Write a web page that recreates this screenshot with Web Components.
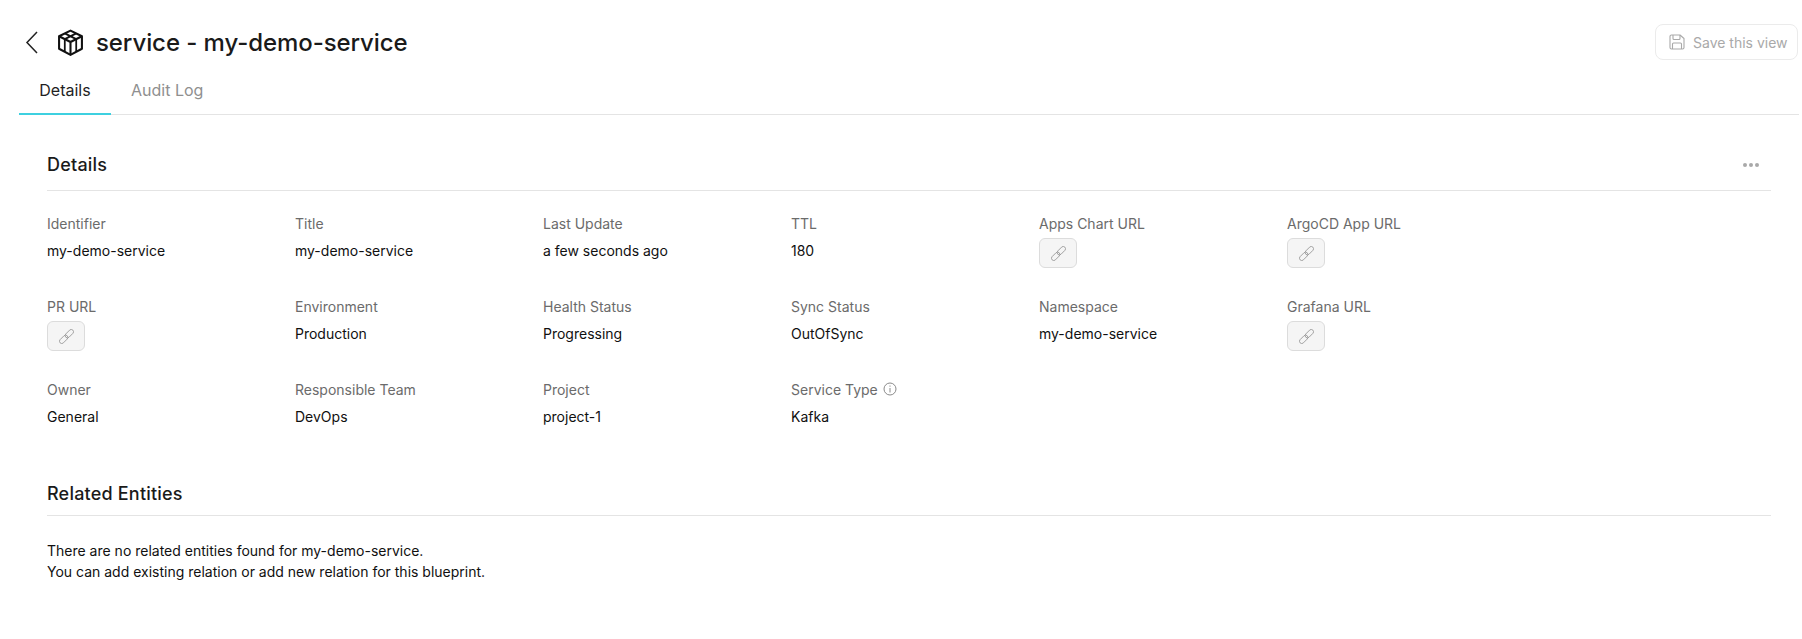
<!DOCTYPE html>
<html>
<head>
<meta charset="utf-8">
<style>
  html, body { margin: 0; background: #fff; }
  body { font-family: Inter, "Liberation Sans", sans-serif; color: #101010; overflow: hidden; }
</style>
</head>
<body>
<page-header></page-header>
<page-tabs></page-tabs>
<info-section heading="Details" menu>
  <info-grid>
    <info-field label="Identifier">my-demo-service</info-field>
    <info-field label="Title">my-demo-service</info-field>
    <info-field label="Last Update">a few seconds ago</info-field>
    <info-field label="TTL">180</info-field>
    <info-field label="Apps Chart URL"><link-button></link-button></info-field>
    <info-field label="ArgoCD App URL"><link-button></link-button></info-field>
    <info-field label="PR URL"><link-button></link-button></info-field>
    <info-field label="Environment">Production</info-field>
    <info-field label="Health Status">Progressing</info-field>
    <info-field label="Sync Status">OutOfSync</info-field>
    <info-field label="Namespace">my-demo-service</info-field>
    <info-field label="Grafana URL"><link-button></link-button></info-field>
    <info-field label="Owner">General</info-field>
    <info-field label="Responsible Team">DevOps</info-field>
    <info-field label="Project">project-1</info-field>
    <info-field label="Service Type" hint>Kafka</info-field>
  </info-grid>
</info-section>
<info-section heading="Related Entities" class="related">
  <div style="font-size:14px;line-height:21px;color:#101010">
    There are no related entities found for my-demo-service.<br>
    You can add existing relation or add new relation for this blueprint.
  </div>
</info-section>

<script>
class PageHeader extends HTMLElement {
  constructor() {
    super()
    this.attachShadow({ mode: 'open' })
    this.shadowRoot.innerHTML = `
      <style>
        :host { display: flex; align-items: center; height: 60px; padding: 24px 0 0 24px; box-sizing: border-box; }
        .back { width: 16px; height: 24px; display: block; }
        .box { width: 27px; height: 27px; margin-left: 17px; display: block; }
        h1 { margin: 1px 0 0 12px; font: 500 24px/1 Inter, sans-serif; color: #1a1a1a; letter-spacing: -.08px; }
        .save { margin-left: auto; margin-right: 4px; height: 36px; width: 143px; box-sizing: border-box; border: 1px solid #ebebeb; border-radius: 8px;
          display: flex; align-items: center; gap: 8px; padding-left: 13px; color: #a9a9a9; font-size: 14px; white-space: nowrap; }
        .save svg { width: 16px; height: 16px; flex: none; }
      </style>
      <svg class="back" viewBox="0 0 16 24" fill="none" stroke="#222" stroke-width="1.5"><path d="M13 2 3 12.5 13 23"/></svg>
      <svg class="box" viewBox="0 0 26 26" fill="none" stroke="#111" stroke-width="2" stroke-linejoin="round">
        <path d="M13 1.500 24 7V19L13 25 2 19V7Z"/>
        <path d="M2 7 13 12.500 24 7M13 12.500V25"/>
        <path d="M7.500 4.250 18.500 9.750V22M18.500 4.250 7.500 9.750V22" stroke-width="1.700"/>
      </svg>
      <h1>service - my-demo-service</h1>
      <div class="save">
        <svg viewBox="0 0 16 16" fill="none" stroke="#a9a9a9" stroke-width="1.1" stroke-linejoin="round">
          <path d="M2.500 1h8.500l4 3.500v9a1.500 1.500 0 0 1-1.500 1.500h-11A1.500 1.500 0 0 1 1 13.500v-11A1.500 1.500 0 0 1 2.500 1Z"/>
          <path d="M4 1v3.500a1 1 0 0 0 1 1h5a1 1 0 0 0 1-1V1M3.500 15V10a1 1 0 0 1 1-1h7a1 1 0 0 1 1 1v5"/>
        </svg>
        <span>Save this view</span>
      </div>
    `
  }
}

class PageTabs extends HTMLElement {
  constructor() {
    super()
    this.attachShadow({ mode: 'open' })
    this.shadowRoot.innerHTML = `
      <style>
        :host { display: flex; height: 54px; margin: 0 3px 0 19px; border-bottom: 1px solid #e4e4e4; }
        div { font-size: 16px; height: 54px; box-sizing: border-box; display: flex; align-items: center; padding-top: 6px; }
        .on { width: 92px; justify-content: center; color: #1f1f1f; border-bottom: 2px solid #3dd0e0; height: 55px; padding-top: 7px; }
        .off { color: #8f8f8f; margin-left: 20px; }
      </style>
      <div class="on">Details</div>
      <div class="off">Audit Log</div>
    `
  }
}

class InfoSection extends HTMLElement {
  constructor() {
    super()
    this.attachShadow({ mode: 'open' })
    this.shadowRoot.innerHTML = `
      <style>
        :host { display: block; margin: 0 31px 0 47px; padding-top: 34px; }
        :host(.related) { padding-top: 16px; }
        header { display: flex; align-items: center; justify-content: space-between; height: 32px; padding-bottom: 9px; border-bottom: 1px solid #e4e4e4; }
        :host(.related) header { padding-bottom: 5px; }
        h2 { margin: 0; font: 500 18px/1 Inter, sans-serif; color: #1a1a1a; letter-spacing: .2px; }
        .more { display: none; margin-right: 12px; gap: 2px; }
        :host([menu]) .more { display: flex; }
        .more i { width: 4px; height: 4px; border-radius: 50%; background: #a9a9a9; }
        main { padding-top: 22px; }
        :host(.related) main { padding-top: 24px; }
      </style>
      <header><h2></h2><div class="more"><i></i><i></i><i></i></div></header>
      <main><slot></slot></main>
    `
  }
  connectedCallback() {
    this.shadowRoot.querySelector('h2').textContent = this.getAttribute('heading')
  }
}

class InfoGrid extends HTMLElement {
  constructor() {
    super()
    this.attachShadow({ mode: 'open' })
    this.shadowRoot.innerHTML = `
      <style>
        :host { display: grid; grid-template-columns: repeat(6, 248px); grid-auto-rows: 83px; }
      </style>
      <slot></slot>
    `
  }
}

class InfoField extends HTMLElement {
  constructor() {
    super()
    this.attachShadow({ mode: 'open' })
    this.shadowRoot.innerHTML = `
      <style>
        :host { display: block; }
        .label { display: flex; align-items: center; gap: 5px; height: 20px; font-size: 14px; color: #6b6b6b; }
        .value { margin-top: 7px; min-height: 22px; font-size: 14px; line-height: 22px; color: #101010; }
        svg { display: none; width: 14px; height: 14px; }
        :host([hint]) svg { display: block; }
      </style>
      <div class="label"><span></span>
        <svg viewBox="0 0 14 14" fill="none" stroke="#8a8a8a"><circle cx="7" cy="7" r="6"/><path d="M7 6v4.500M7 3.500v1.200"/></svg>
      </div>
      <div class="value"><slot></slot></div>
    `
  }
  connectedCallback() {
    this.shadowRoot.querySelector('span').textContent = this.getAttribute('label')
  }
}

class LinkButton extends HTMLElement {
  constructor() {
    super()
    this.attachShadow({ mode: 'open' })
    this.shadowRoot.innerHTML = `
      <style>
        :host { display: flex; align-items: center; justify-content: center; width: 38px; height: 30px; box-sizing: border-box;
          background: #f5f5f5; border: 1px solid #dcdcdc; border-radius: 6px; margin-top: -2px; }
        svg { width: 15px; height: 15px; }
      </style>
      <svg viewBox="0 0 15 15" fill="none" stroke="#9c9c9c" stroke-width=".9">
        <g transform="rotate(45 7.500 7.500)">
          <rect x="5.200" y="-1.500" width="4.600" height="10" rx="2.300"/>
          <rect x="5.200" y="6.500" width="4.600" height="10" rx="2.300"/>
        </g>
      </svg>
    `
  }
}

customElements.define('page-header', PageHeader)
customElements.define('page-tabs', PageTabs)
customElements.define('info-section', InfoSection)
customElements.define('info-grid', InfoGrid)
customElements.define('info-field', InfoField)
customElements.define('link-button', LinkButton)
</script>
</body>
</html>
